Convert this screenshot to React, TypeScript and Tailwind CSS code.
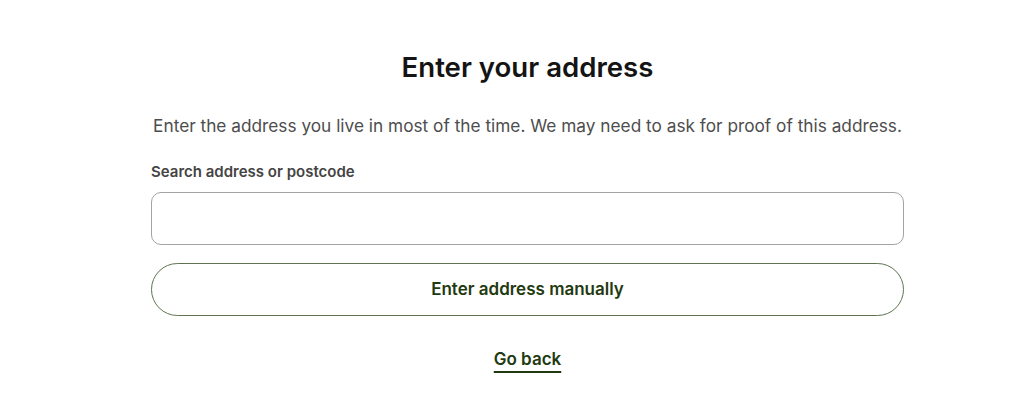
import React, { useState } from "react";

const App = () => {
  const [query, setQuery] = useState("");

  return (
    <div
      className="min-h-screen bg-white flex justify-center pl-[31px]"
      style={{ fontFamily: "Inter, 'Noto Sans', sans-serif" }}
    >
      <div className="w-[753px] pt-[48px] flex flex-col">
        <h1 className="text-[27.6px] leading-[38px] font-semibold text-center text-[#141414]">
          Enter your address
        </h1>

        <p className="mt-[27px] text-[17.25px] leading-[26px] text-center text-[#4d4d4d]">
          Enter the address you live in most of the time. We may need to ask for proof of this address.
        </p>

        <label
          htmlFor="address-search"
          className="mt-[22px] text-[15px] leading-[22px] font-semibold text-[#444444]"
        >
          Search address or postcode
        </label>

        <input
          id="address-search"
          type="text"
          value={query}
          onChange={(e) => setQuery(e.target.value)}
          className="mt-[9px] h-[53px] w-full rounded-[10px] border border-[#a3a3a3] px-4 text-[17px] outline-none"
        />

        <button
          type="button"
          className="mt-[18px] h-[53px] w-full rounded-full border border-[#5e7450] text-[17px] font-semibold text-[#1f3a10]"
        >
          Enter address manually
        </button>

        <div className="mt-[31px] flex justify-center">
          <a
            href="#"
            className="text-[17px] leading-[24px] font-semibold text-[#1f3a10] underline decoration-2 underline-offset-[6px]"
          >
            Go back
          </a>
        </div>
      </div>
    </div>
  );
};

export default App;
